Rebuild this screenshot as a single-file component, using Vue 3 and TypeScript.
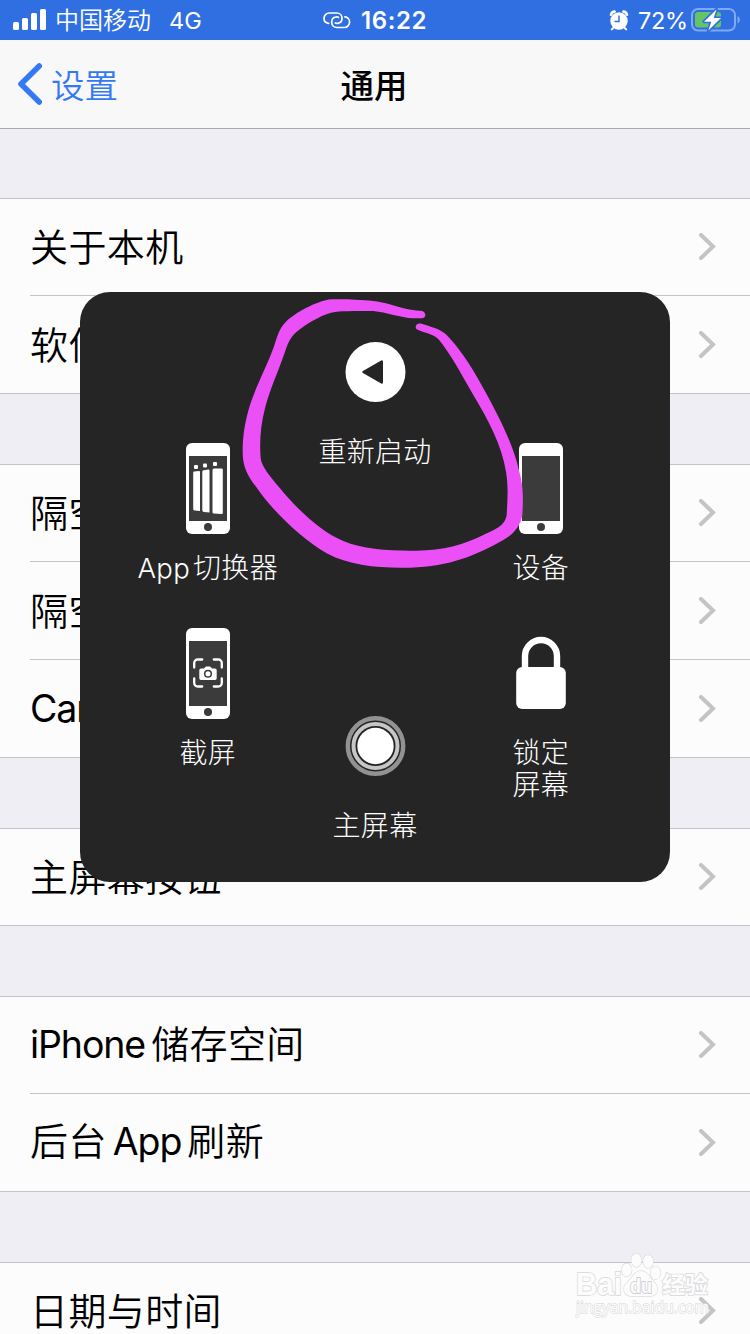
<script setup lang="ts">
interface Part { text: string; latin?: boolean }
interface Row { parts: Part[] }

const cjk = (text: string): Part => ({ text })
const latin = (text: string): Part => ({ text, latin: true })

const groups: Row[][] = [
  [{ parts: [cjk('关于本机')] }, { parts: [cjk('软件更新')] }],
  [{ parts: [cjk('隔空播放与接力')] }, { parts: [cjk('隔空投送')] }, { parts: [latin('CarPlay')] }],
  [{ parts: [cjk('主屏幕按钮')] }],
  [{ parts: [latin('iPhone'), cjk('储存空间')] }, { parts: [cjk('后台'), latin('App'), cjk('刷新')] }],
  [{ parts: [cjk('日期与时间')] }],
]
</script>

<template>
  <main class="screen">
    <header class="status">
      <div class="status-left">
        <svg class="signal" width="34" height="22" viewBox="0 0 34 22" fill="#fff">
          <rect x="0" y="13" width="6" height="8" rx="1.6" />
          <rect x="9" y="9" width="6" height="12" rx="1.6" />
          <rect x="18" y="4" width="6" height="17" rx="1.6" />
          <rect x="27" y="0" width="6" height="21" rx="1.6" />
        </svg>
        <span class="carrier">中国移动</span>
        <span class="network">4G</span>
      </div>
      <div class="status-center">
        <svg width="28" height="17" viewBox="0 0 28 17" fill="none" stroke="#fff" stroke-width="1.7" stroke-linecap="round">
          <path d="M5.700 11.400C3 11.100 1 9 1 6.300 1 3.300 3.300 1 6.300 1h7.500C16.800 1 19 3.300 19 6.200c0 2.600-1.800 4.800-4.300 5.100-1 .1-1.700 0-2.400-.3" />
          <path d="M21.900 4.900c2.700.3 4.700 2.500 4.700 5.200 0 3-2.300 5.400-5.200 5.400h-7.500c-3 0-5.200-2.400-5.200-5.300 0-2.700 1.800-4.900 4.300-5.200 1-.1 1.700 0 2.400.3" />
        </svg>
        <span class="time">16:22</span>
      </div>
      <div class="status-right">
        <svg class="alarm" width="20" height="21" viewBox="0 0 20 21">
          <circle cx="10" cy="11" r="8.700" fill="#fff" />
          <path d="M2 4.700A4 4 0 0 1 5.600 1.600M18 4.700A4 4 0 0 0 14.400 1.600" fill="none" stroke="#fff" stroke-width="2.600" stroke-linecap="round" />
          <path d="M4 18.200l-1.200 1.200M16 18.200l1.200 1.200" stroke="#fff" stroke-width="2" stroke-linecap="round" />
          <path d="M10 5.500v6H5.500" fill="none" stroke="#2f6fe2" stroke-width="1.500" />
        </svg>
        <span class="percent">72%</span>
        <svg width="50" height="26" viewBox="0 0 50 26">
          <rect x="1" y="2" width="43" height="21.500" rx="6" fill="none" stroke="#82a9ee" stroke-width="2" />
          <path d="M46.500 9v7.500c1.500-.7 2.300-2 2.300-3.700s-.8-3.100-2.300-3.800z" fill="#82a9ee" />
          <rect x="4" y="5" width="26" height="15.500" rx="3" fill="#65c466" />
          <path d="M25.500 2.500L13 14.700h7.300L17.300 23.500 30 11h-7.300z" fill="#fff" stroke="#2f6fe2" stroke-width="3.200" paint-order="stroke" stroke-linejoin="round" />
        </svg>
      </div>
    </header>

    <nav class="nav">
      <div class="back">
        <svg width="26" height="44" viewBox="0 0 26 44" fill="none" stroke="#3478f6" stroke-width="5.600" stroke-linecap="round" stroke-linejoin="round">
          <path d="M22.200 4L4 22l18.200 18" />
        </svg>
        <span>设置</span>
      </div>
      <h1>通用</h1>
      <span></span>
    </nav>

    <section v-for="(rows, g) in groups" :key="g" class="group">
      <div v-for="(row, r) in rows" :key="r" class="row">
        <div class="row-body">
          <span class="title"><span v-for="(p, i) in row.parts" :key="i" :class="p.latin ? 'latin' : 'cjk'">{{ p.text }}</span></span>
          <svg width="18" height="28" viewBox="0 0 18 28" fill="none" stroke="#c4c4c6" stroke-width="4" stroke-linecap="round">
            <path d="M3 2L15 13.500 3 25" stroke-linejoin="miter" />
          </svg>
        </div>
      </div>
    </section>

    <div class="panel">
      <div class="column side">
        <div class="item">
          <svg class="glyph" width="44" height="91" viewBox="0 0 44 91">
            <rect width="44" height="91" rx="6" fill="#fff" />
            <rect x="3" y="13" width="38" height="65" fill="#3b3b3b" />
            <circle cx="22" cy="84" r="4" fill="#3b3b3b" />
            <g fill="#fff">
              <rect x="8" y="22" width="4" height="4" rx="1" />
              <rect x="17" y="20.500" width="4" height="4" rx="1" />
              <rect x="27" y="19" width="4" height="4" rx="1" />
              <path d="M8 28.500l5-.5q1 0 1 1v39l-5-.5q-1.800 0-1.800-1.500V30q0-1.500.8-1.500z" />
              <path d="M17.500 27.200l5-.7q1 0 1 1V69.500l-5.500-.6q-1.700-.1-1.700-1.600V28.700q0-1.500 1.200-1.500z" />
              <path d="M28 25.500h7.500q1.300 0 1.300 1.300V70q0 1-1.300 1l-7.800-.5q-1.200-.1-1.200-1.300V27q0-1.500 1.500-1.500z" />
            </g>
          </svg>
          <p class="label"><span class="label-latin">App</span>切换器</p>
        </div>
        <div class="item">
          <svg class="glyph" width="44" height="91" viewBox="0 0 44 91">
            <rect width="44" height="91" rx="6" fill="#fff" />
            <rect x="3" y="13" width="38" height="65" fill="#3b3b3b" />
            <circle cx="22" cy="84" r="4" fill="#3b3b3b" />
            <path d="M8.200 39.500v-4.500a3.500 3.500 0 0 1 3.500-3.500h4.500M27.800 31.500h4.500a3.500 3.500 0 0 1 3.500 3.500v4.500M35.800 50.500V55a3.500 3.500 0 0 1-3.500 3.500h-4.500M16.200 58.500h-4.500A3.500 3.500 0 0 1 8.200 55v-4.500" fill="none" stroke="#fff" stroke-width="2.300" stroke-linecap="round" />
            <path d="M15 40.500h3l1.200-1.400q.4-.6 1.200-.6h3.200q.8 0 1.200.6l1.200 1.400h3q1.700 0 1.700 1.700v8q0 1.700-1.700 1.700H15q-1.700 0-1.700-1.700v-8q0-1.700 1.700-1.700z" fill="#fff" />
            <circle cx="22" cy="45.800" r="3.300" fill="none" stroke="#3b3b3b" stroke-width="1.500" />
          </svg>
          <p class="label">截屏</p>
        </div>
      </div>

      <div class="column middle">
        <div class="item restart">
          <svg class="glyph" width="61" height="61" viewBox="0 0 61 61">
            <circle cx="30.500" cy="30" r="30" fill="#fff" />
            <path d="M18.500 30L36.800 19.500v21z" fill="#252525" stroke="#252525" stroke-width="2.400" stroke-linejoin="round" />
          </svg>
          <p class="label">重新启动</p>
        </div>
        <div class="item home">
          <svg class="glyph" width="61" height="61" viewBox="0 0 61 61" fill="none">
            <circle cx="30.500" cy="30" r="27.700" stroke="#929292" stroke-width="4.400" />
            <circle cx="30.500" cy="30" r="22" stroke="#c6c6c6" stroke-width="4" />
            <circle cx="30.500" cy="30" r="18.200" fill="#fff" />
          </svg>
          <p class="label">主屏幕</p>
        </div>
      </div>

      <div class="column side">
        <div class="item">
          <svg class="glyph" width="44" height="91" viewBox="0 0 44 91">
            <rect width="44" height="91" rx="6" fill="#fff" />
            <rect x="3" y="13" width="38" height="65" fill="#3b3b3b" />
            <circle cx="22" cy="84" r="4" fill="#3b3b3b" />
          </svg>
          <p class="label">设备</p>
        </div>
        <div class="item">
          <svg class="glyph" width="50" height="91" viewBox="0 0 50 91">
            <path d="M9 44V28a16 16 0 0 1 32 0v16" fill="none" stroke="#fff" stroke-width="6.400" />
            <rect x="0.200" y="39" width="49.600" height="42" rx="6" fill="#fff" />
          </svg>
          <p class="label">锁定<br />屏幕</p>
        </div>
      </div>
    </div>

    <svg class="marker" width="300" height="300" viewBox="0 0 900 900">
      <path fill="#eb50f7" d="M586 90C586 82 580 77 570 77C555 77 540 74 530 72C490 62 460 51 430 48C385 43 335 42 305 43C260 46 190 88 168 110C146 132 142 155 130 190C105 255 80 300 60 360C45 410 38 450 38 500C38 550 55 575 85 615C130 680 220 765 290 805C360 843 450 850 540 848C660 845 740 810 820 765C855 745 872 720 877 690C880 640 880 600 868 560C850 480 810 400 760 310C720 235 680 180 650 150C630 130 600 125 575 116C555 112 552 132 565 135C590 145 610 148 625 162C660 205 690 260 730 330C775 405 815 480 828 560C836 610 832 650 830 690C825 725 790 735 760 750C700 780 640 796 560 797C480 798 400 793 340 768C270 740 190 660 150 610C120 575 95 545 92 520C88 470 92 420 105 370C120 310 145 260 165 200C174 172 182 156 200 140C235 112 285 83 320 80C355 77 395 78 430 78C470 82 510 98 550 100L575 100C582 99 586 95 586 90Z" />
    </svg>

    <svg class="watermark" width="150" height="80" viewBox="0 0 150 80">
      <g fill="#fcfcfd" stroke="#dcdcde" stroke-width="1.300" paint-order="stroke">
        <ellipse cx="61.300" cy="10.200" rx="4.900" ry="6.800" />
        <ellipse cx="73.200" cy="11.500" rx="5" ry="6.500" />
        <ellipse cx="51.700" cy="20" rx="5" ry="6.500" />
        <ellipse cx="80.500" cy="22.800" rx="5" ry="6.500" />
        <path d="M65.500 21c6 0 8 4 11 8s6 5.500 6 10.500c0 4-3 6.500-7 6.500H56.500c-5 0-7.500-3-7.500-7 0-5 4-7 6.500-10s5-8 10-8z" />
        <g stroke-width="1.800">
          <text x="1" y="45" class="brand" textLength="46" lengthAdjust="spacingAndGlyphs">Bai</text>
          <text x="55" y="43" class="du" textLength="22" lengthAdjust="spacingAndGlyphs">du</text>
          <text x="87" y="43" class="exp" textLength="46" lengthAdjust="spacingAndGlyphs">经验</text>
        </g>
        <text x="1" y="63" class="site" textLength="133" lengthAdjust="spacingAndGlyphs">jingyan.baidu.com</text>
      </g>
    </svg>
  </main>
</template>

<style scoped>
.screen {
  position: relative;
  width: 750px;
  height: 1334px;
  overflow: hidden;
  background: #efeef4;
  color: #000;
  font-family: Inter, "Noto Sans CJK SC", sans-serif;
}
.screen svg { display: block; flex: none; }
.status {
  display: grid;
  grid-template-columns: 1fr auto 1fr;
  height: 40px;
  background: #2f6fe2;
  color: #fff;
  font-size: 24px;
  line-height: 40px;
  white-space: nowrap;
}
.status-left, .status-center, .status-right { display: flex; align-items: center; height: 40px; }
.status-left { padding-left: 13px; }
.carrier { margin-left: 8px; padding-bottom: 2px; font-family: "Noto Sans CJK SC", sans-serif; font-weight: 350; line-height: 38px; }
.network { margin-left: 18px; padding-top: 2px; line-height: 38px; font-size: 23.5px; }
.status-center { gap: 10px; }
.time { width: 66px; padding-top: 2px; line-height: 38px; font-weight: 600; letter-spacing: 0.6px; }
.status-right { justify-content: flex-end; padding-right: 9px; }
.alarm { margin-right: 9px; }
.percent { width: 53px; padding-top: 2px; line-height: 38px; font-size: 23.5px; letter-spacing: -0.3px; }
.nav {
  display: grid;
  grid-template-columns: 1fr auto 1fr;
  align-items: center;
  height: 88px;
  border-bottom: 1px solid #a9a9ad;
  background: #f8f8f8;
}
.back {
  display: flex;
  align-items: center;
  gap: 8px;
  padding-left: 17px;
  color: #3478f6;
  font: 350 33.5px/88px "Noto Sans CJK SC", sans-serif;
}
h1 { margin: 0; padding-right: 2px; font: 500 33.5px/88px "Noto Sans CJK SC", sans-serif; }
.group { margin-top: 70px; border-top: 1px solid #c3c3c6; background: #fcfcfc; }
.nav + .group { margin-top: 69px; }
.row { height: 98px; padding-left: 30px; }
.row:first-child { height: 97px; }
.row-body {
  display: flex;
  box-sizing: border-box;
  height: 100%;
  align-items: center;
  justify-content: space-between;
  padding-right: 34px;
  border-bottom: 1px solid #c3c3c6;
}
.row:last-child { padding-left: 0; }
.row:last-child .row-body { padding-left: 30px; }
.title { display: flex; align-items: baseline; padding-bottom: 4px; font-size: 38px; line-height: 92px; white-space: nowrap; }
.cjk { font-family: "Noto Sans CJK SC", sans-serif; font-weight: 350; letter-spacing: 0.4px; }
.latin { font-size: 37.5px; letter-spacing: -1.1px; }
.latin:only-child { padding-top: 5px; }
.latin + .cjk { margin-left: 6px; }
.cjk + .latin { margin-left: 6px; }
.panel {
  position: absolute;
  left: 80px;
  top: 292px;
  display: grid;
  grid-template-columns: repeat(3, 166.5px);
  justify-content: center;
  box-sizing: border-box;
  width: 590px;
  height: 590px;
  padding-right: 1.5px;
  border-radius: 30px;
  background: #252525;
  color: #fff;
}
.side { padding-top: 151px; }
.middle { padding: 50px 0 0 1.5px; }
.item { display: flex; flex-direction: column; align-items: center; height: 185px; }
.restart { height: 374px; }
.label {
  margin: 16px 0 0;
  font: 300 28px/32px "Noto Sans CJK SC", sans-serif;
  letter-spacing: 0.3px;
  text-align: center;
  white-space: nowrap;
}
.middle .label { margin-top: 31px; }
.label-latin { margin-right: 3px; font-family: Inter, sans-serif; font-size: 27.5px; }
.marker { position: absolute; left: 230px; top: 285px; }
.watermark { position: absolute; left: 575px; top: 1250px; }
.brand { font: 700 32px "Liberation Sans", sans-serif; }
.du { font: 700 20px "Liberation Sans", sans-serif; stroke: #cfcfd2; }
.exp { font: 700 23px "Noto Sans CJK SC", sans-serif; }
.site { font: 400 16px "Open Sans", sans-serif; }
</style>

<style>
body { margin: 0; }
</style>
